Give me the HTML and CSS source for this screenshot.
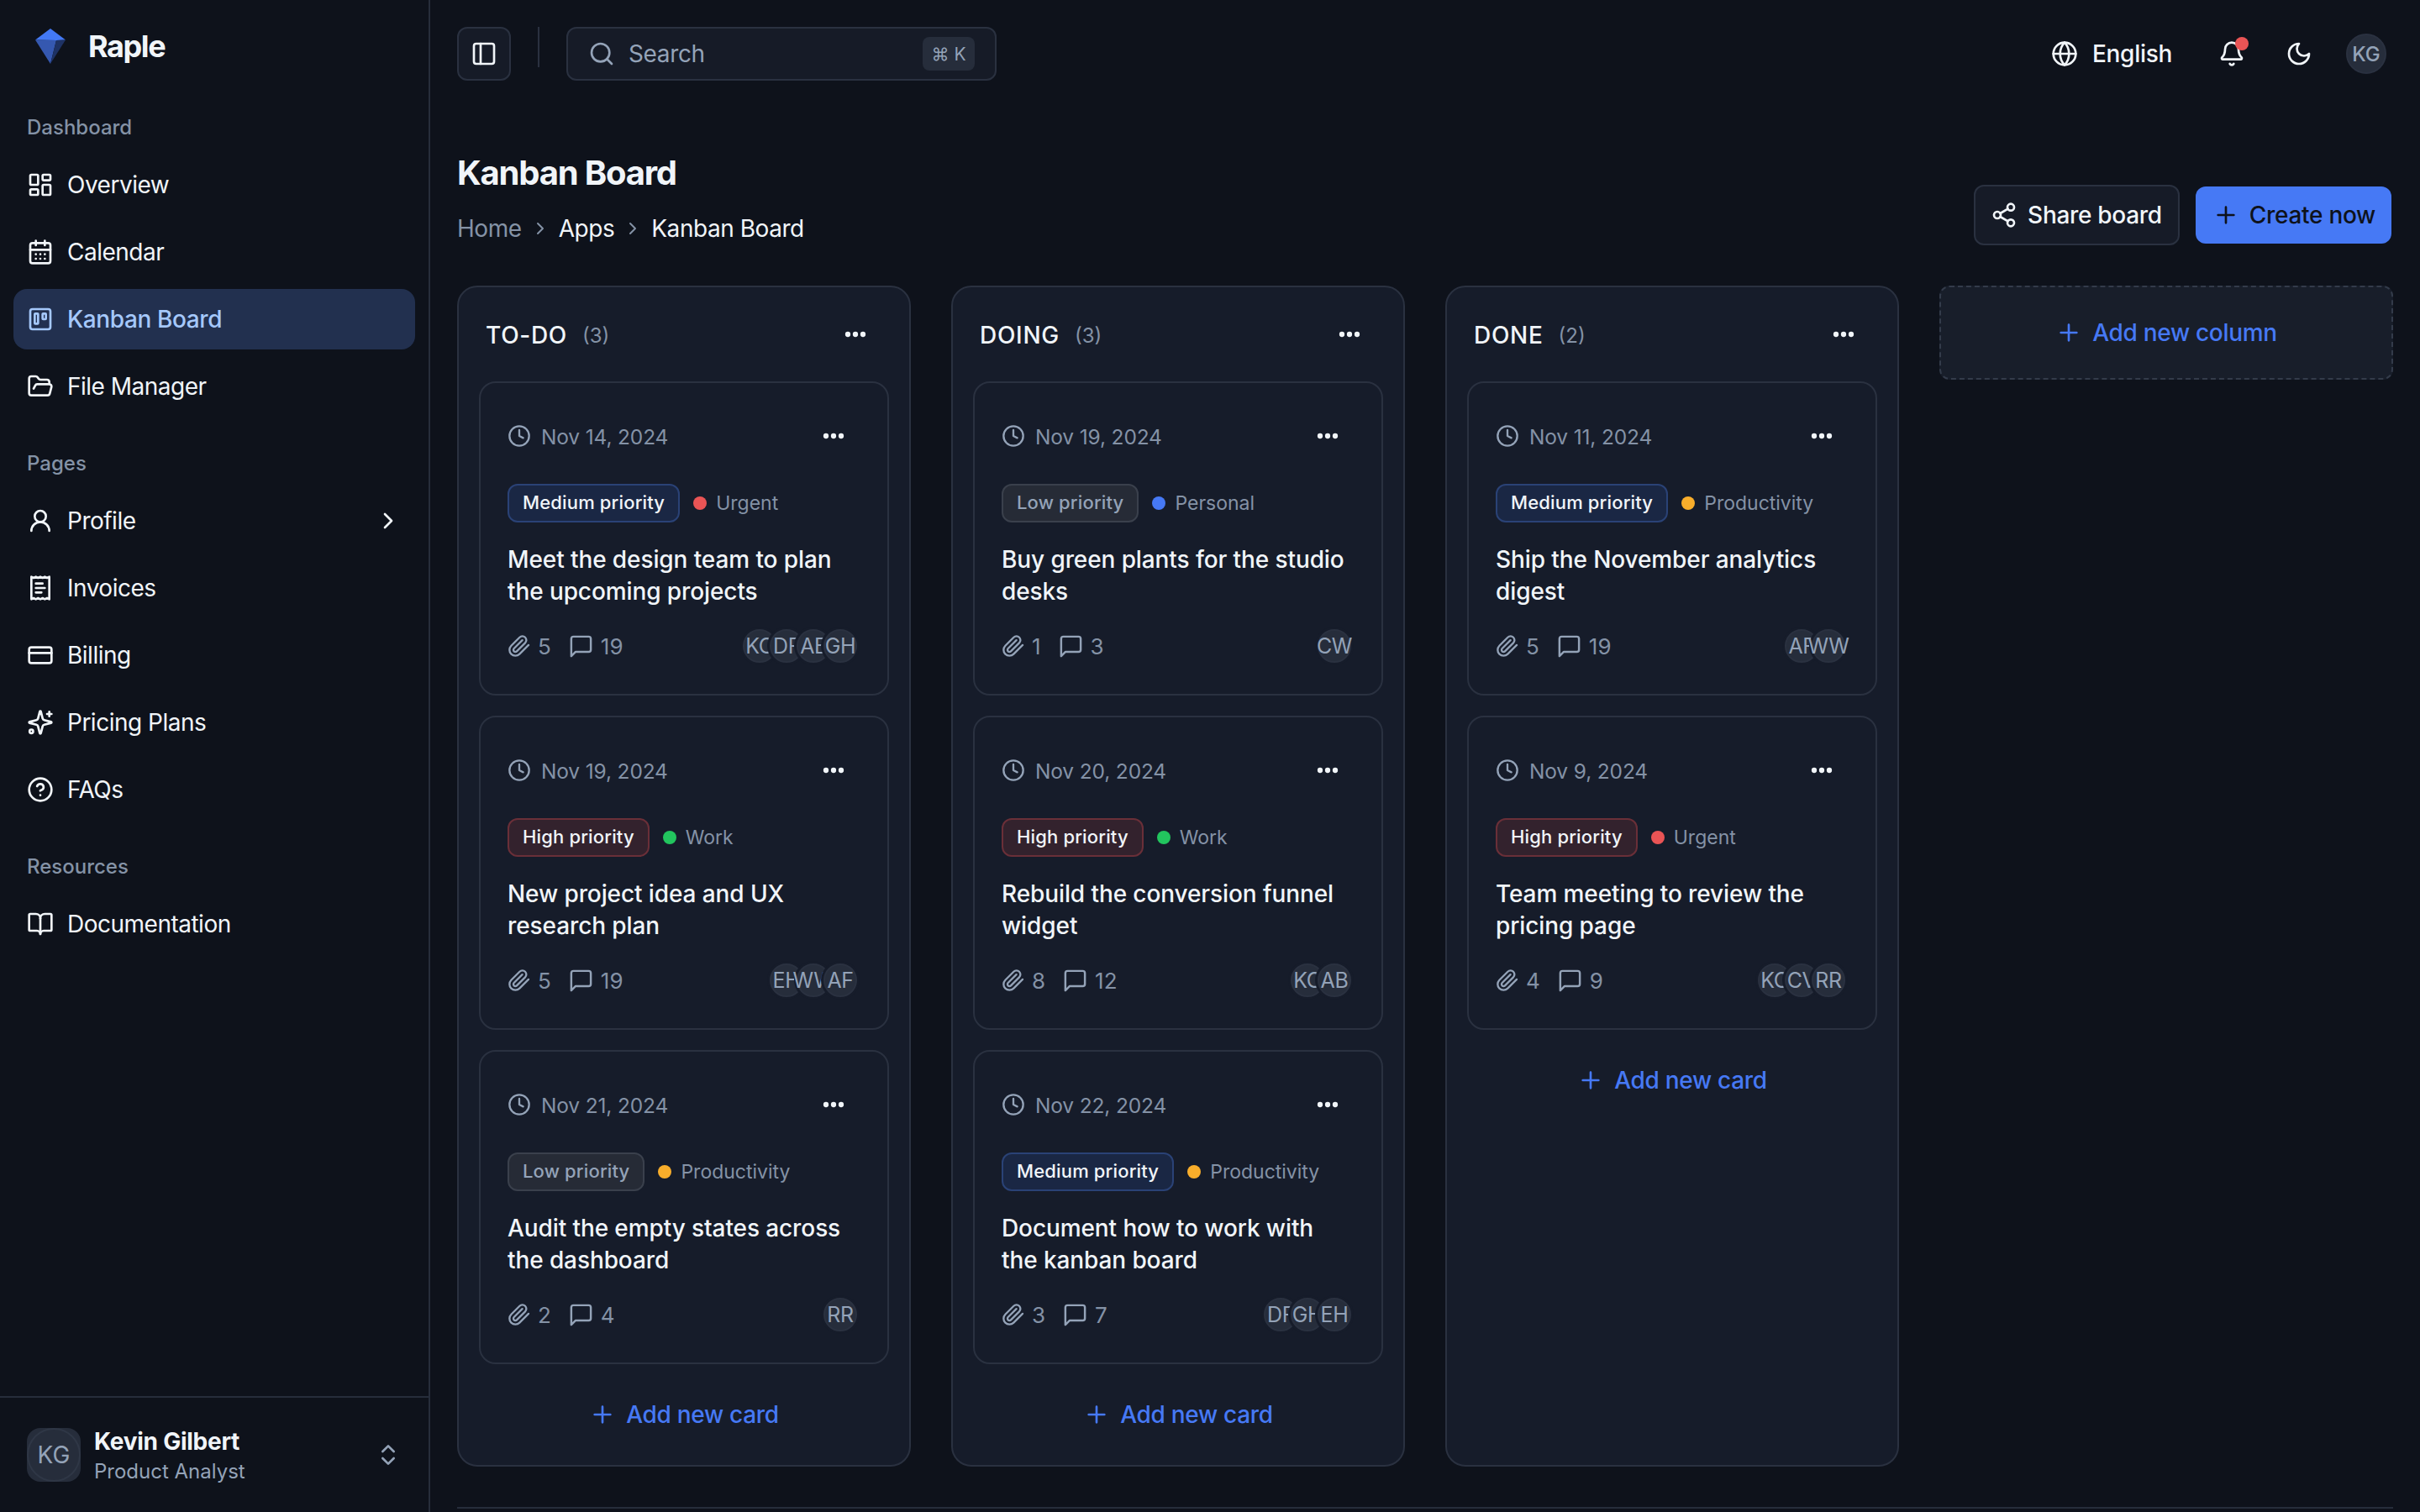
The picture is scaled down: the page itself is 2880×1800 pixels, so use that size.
FILE: index.html
```html
<!DOCTYPE html>
<html>
<head>
  <title>Kanban Board</title>
  <link rel="stylesheet" href="styles.css">
</head>
<body>
  <!-- icon sprite -->
  <svg class="sprite" xmlns="http://www.w3.org/2000/svg">
    <symbol id="i-overview" viewBox="0 0 24 24"><rect x="3" y="3" width="7" height="9" rx="1"/><rect x="14" y="3" width="7" height="5" rx="1"/><rect x="14" y="12" width="7" height="9" rx="1"/><rect x="3" y="16" width="7" height="5" rx="1"/></symbol>
    <symbol id="i-calendar" viewBox="0 0 24 24"><path d="M8 2v4M16 2v4"/><rect x="3" y="4" width="18" height="18" rx="2"/><path d="M3 10h18M8 14h.01M12 14h.01M16 14h.01M8 18h.01M12 18h.01M16 18h.01"/></symbol>
    <symbol id="i-kanban" viewBox="0 0 24 24"><rect x="3" y="3" width="18" height="18" rx="2"/><rect x="7" y="7" width="3" height="9" rx=".5"/><rect x="14" y="7" width="3" height="5" rx=".5"/></symbol>
    <symbol id="i-folder" viewBox="0 0 24 24"><path d="m6 14 1.5-2.9A2 2 0 0 1 9.24 10H20a2 2 0 0 1 1.94 2.5l-1.54 6a2 2 0 0 1-1.95 1.5H4a2 2 0 0 1-2-2V5a2 2 0 0 1 2-2h3.9a2 2 0 0 1 1.69.9l.81 1.2a2 2 0 0 0 1.67.9H18a2 2 0 0 1 2 2v2"/></symbol>
    <symbol id="i-user" viewBox="0 0 24 24"><circle cx="12" cy="8" r="5"/><path d="M20 21a8 8 0 0 0-16 0"/></symbol>
    <symbol id="i-receipt" viewBox="0 0 24 24"><path d="M4 2v20l2-1 2 1 2-1 2 1 2-1 2 1 2-1 2 1V2l-2 1-2-1-2 1-2-1-2 1-2-1-2 1Z"/><path d="M14 8H8M16 12H8M13 16H8"/></symbol>
    <symbol id="i-card" viewBox="0 0 24 24"><rect x="2" y="5" width="20" height="14" rx="2"/><path d="M2 10h20"/></symbol>
    <symbol id="i-sparkle" viewBox="0 0 24 24"><path d="M9.937 15.5A2 2 0 0 0 8.5 14.063l-6.135-1.582a.5.5 0 0 1 0-.962L8.5 9.936A2 2 0 0 0 9.937 8.5l1.582-6.135a.5.5 0 0 1 .963 0L14.063 8.5A2 2 0 0 0 15.5 9.937l6.135 1.581a.5.5 0 0 1 0 .964L15.5 14.063a2 2 0 0 0-1.437 1.437l-1.582 6.135a.5.5 0 0 1-.963 0z"/><path d="M20 2.5v4M22 4.5h-4"/><circle cx="4" cy="20" r="1.6"/></symbol>
    <symbol id="i-help" viewBox="0 0 24 24"><circle cx="12" cy="12" r="10"/><path d="M9.09 9a3 3 0 0 1 5.83 1c0 2-3 3-3 3M12 17h.01"/></symbol>
    <symbol id="i-book" viewBox="0 0 24 24"><path d="M12 7v14"/><path d="M3 18a1 1 0 0 1-1-1V4a1 1 0 0 1 1-1h5a4 4 0 0 1 4 4 4 4 0 0 1 4-4h5a1 1 0 0 1 1 1v13a1 1 0 0 1-1 1h-6a3 3 0 0 0-3 3 3 3 0 0 0-3-3z"/></symbol>
    <symbol id="i-right" viewBox="0 0 24 24"><path d="m9 18 6-6-6-6"/></symbol>
    <symbol id="i-updown" viewBox="0 0 24 24"><path d="m7 15 5 5 5-5M7 9l5-5 5 5"/></symbol>
    <symbol id="i-panel" viewBox="0 0 24 24"><rect x="3" y="3" width="18" height="18" rx="2"/><path d="M9 3v18"/></symbol>
    <symbol id="i-search" viewBox="0 0 24 24"><circle cx="11" cy="11" r="8"/><path d="m21 21-4.3-4.3"/></symbol>
    <symbol id="i-globe" viewBox="0 0 24 24"><circle cx="12" cy="12" r="10"/><path d="M12 2a14.5 14.5 0 0 0 0 20 14.5 14.5 0 0 0 0-20M2 12h20"/></symbol>
    <symbol id="i-bell" viewBox="0 0 24 24"><path d="M10.268 21a2 2 0 0 0 3.464 0"/><path d="M3.262 15.326A1 1 0 0 0 4 17h16a1 1 0 0 0 .74-1.673C19.41 13.956 18 12.499 18 8A6 6 0 0 0 6 8c0 4.499-1.411 5.956-2.738 7.326"/></symbol>
    <symbol id="i-moon" viewBox="0 0 24 24"><path d="M12 3a6 6 0 0 0 9 9 9 9 0 1 1-9-9Z"/></symbol>
    <symbol id="i-share" viewBox="0 0 24 24"><circle cx="18" cy="5" r="3"/><circle cx="6" cy="12" r="3"/><circle cx="18" cy="19" r="3"/><path d="m8.59 13.51 6.83 3.98M15.41 6.51l-6.82 3.98"/></symbol>
    <symbol id="i-plus" viewBox="0 0 24 24"><path d="M5 12h14M12 5v14"/></symbol>
    <symbol id="i-clock" viewBox="0 0 24 24"><circle cx="12" cy="12" r="10"/><path d="M12 6v6l4 2"/></symbol>
    <symbol id="i-clip" viewBox="0 0 24 24"><path d="m21.44 11.05-9.19 9.19a6 6 0 0 1-8.49-8.49l8.57-8.57A4 4 0 1 1 18 8.84l-8.59 8.57a2 2 0 0 1-2.83-2.83l8.49-8.48"/></symbol>
    <symbol id="i-comment" viewBox="0 0 24 24"><path d="M21 15a2 2 0 0 1-2 2H7l-4 4V5a2 2 0 0 1 2-2h14a2 2 0 0 1 2 2z"/></symbol>
    <symbol id="i-dots" viewBox="0 0 24 24"><circle cx="6" cy="12" r="2.1"/><circle cx="12" cy="12" r="2.1"/><circle cx="18" cy="12" r="2.1"/></symbol>
  </svg>

  <aside class="sidebar">
    <div class="brand">
      <svg class="brand-logo" viewBox="0 0 38 42" xmlns="http://www.w3.org/2000/svg">
        <polygon points="19,0 37,13.5 26,14 1,13.5" fill="#4379f5"/>
        <polygon points="1,13.5 26,14 19,42" fill="#3558b0"/>
        <polygon points="26,14 37,13.5 19,42" fill="#1e3264"/>
      </svg>
      <span>Raple</span>
    </div>

    <div class="nav-section nav-first">
      <p class="nav-label">Dashboard</p>
      <nav class="nav-list">
        <a class="nav-item"><svg class="icon"><use href="#i-overview"/></svg>Overview</a>
        <a class="nav-item"><svg class="icon"><use href="#i-calendar"/></svg>Calendar</a>
        <a class="nav-item active"><svg class="icon"><use href="#i-kanban"/></svg>Kanban Board</a>
        <a class="nav-item"><svg class="icon"><use href="#i-folder"/></svg>File Manager</a>
      </nav>
    </div>

    <div class="nav-section">
      <p class="nav-label">Pages</p>
      <nav class="nav-list">
        <a class="nav-item"><svg class="icon"><use href="#i-user"/></svg>Profile<svg class="icon nav-arrow"><use href="#i-right"/></svg></a>
        <a class="nav-item"><svg class="icon"><use href="#i-receipt"/></svg>Invoices</a>
        <a class="nav-item"><svg class="icon"><use href="#i-card"/></svg>Billing</a>
        <a class="nav-item"><svg class="icon"><use href="#i-sparkle"/></svg>Pricing Plans</a>
        <a class="nav-item"><svg class="icon"><use href="#i-help"/></svg>FAQs</a>
      </nav>
    </div>

    <div class="nav-section">
      <p class="nav-label">Resources</p>
      <nav class="nav-list">
        <a class="nav-item"><svg class="icon"><use href="#i-book"/></svg>Documentation</a>
      </nav>
    </div>

    <div class="side-user">
      <div class="side-avatar"><span>KG</span></div>
      <div class="side-user-text">
        <p class="side-user-name">Kevin Gilbert</p>
        <p class="side-user-role">Product Analyst</p>
      </div>
      <svg class="icon side-updown"><use href="#i-updown"/></svg>
    </div>
  </aside>

  <main class="main">
    <header class="topbar">
      <button class="toggle-btn"><svg class="icon"><use href="#i-panel"/></svg></button>
      <span class="topbar-sep"></span>
      <div class="search">
        <svg class="icon"><use href="#i-search"/></svg>
        <span class="search-text">Search</span>
        <kbd class="search-key">⌘ K</kbd>
      </div>
      <div class="topbar-right">
        <div class="lang"><svg class="icon"><use href="#i-globe"/></svg>English</div>
        <div class="bell"><svg class="icon"><use href="#i-bell"/></svg><span class="bell-dot"></span></div>
        <svg class="icon moon"><use href="#i-moon"/></svg>
        <div class="top-avatar">KG</div>
      </div>
    </header>

    <section class="page-head">
      <div>
        <h1 class="page-title">Kanban Board</h1>
        <div class="crumbs">
          <span class="crumb-home">Home</span>
          <svg class="crumb-sep"><use href="#i-right"/></svg>
          <span>Apps</span>
          <svg class="crumb-sep"><use href="#i-right"/></svg>
          <span>Kanban Board</span>
        </div>
      </div>
      <div class="page-actions">
        <button class="btn btn-share"><svg class="icon"><use href="#i-share"/></svg>Share board</button>
        <button class="btn btn-create"><svg class="icon"><use href="#i-plus"/></svg>Create now</button>
      </div>
    </section>

    <section class="board">
      <div class="column">
        <div class="column-head">
          <h2>TO-DO</h2><span class="column-count">(3)</span>
          <svg class="dots"><use href="#i-dots"/></svg>
        </div>
        <div class="card-list">
          <article class="card">
            <div class="card-date"><svg class="icon-sm"><use href="#i-clock"/></svg><span>Nov 14, 2024</span><svg class="dots"><use href="#i-dots"/></svg></div>
            <div class="card-tags"><span class="badge medium">Medium priority</span><span class="tag"><i class="tag-dot red"></i>Urgent</span></div>
            <h3 class="card-title">Meet the design team to plan the upcoming projects</h3>
            <div class="card-foot">
              <span class="stat"><svg class="icon-sm"><use href="#i-clip"/></svg>5</span>
              <span class="stat"><svg class="icon-comment"><use href="#i-comment"/></svg>19</span>
              <div class="avatars"><span class="avatar">KC</span><span class="avatar">DF</span><span class="avatar">AE</span><span class="avatar">GH</span></div>
            </div>
          </article>
          <article class="card">
            <div class="card-date"><svg class="icon-sm"><use href="#i-clock"/></svg><span>Nov 19, 2024</span><svg class="dots"><use href="#i-dots"/></svg></div>
            <div class="card-tags"><span class="badge high">High priority</span><span class="tag"><i class="tag-dot green"></i>Work</span></div>
            <h3 class="card-title">New project idea and UX research plan</h3>
            <div class="card-foot">
              <span class="stat"><svg class="icon-sm"><use href="#i-clip"/></svg>5</span>
              <span class="stat"><svg class="icon-comment"><use href="#i-comment"/></svg>19</span>
              <div class="avatars"><span class="avatar">EH</span><span class="avatar">WW</span><span class="avatar">AF</span></div>
            </div>
          </article>
          <article class="card">
            <div class="card-date"><svg class="icon-sm"><use href="#i-clock"/></svg><span>Nov 21, 2024</span><svg class="dots"><use href="#i-dots"/></svg></div>
            <div class="card-tags"><span class="badge low">Low priority</span><span class="tag"><i class="tag-dot orange"></i>Productivity</span></div>
            <h3 class="card-title">Audit the empty states across the dashboard</h3>
            <div class="card-foot">
              <span class="stat"><svg class="icon-sm"><use href="#i-clip"/></svg>2</span>
              <span class="stat"><svg class="icon-comment"><use href="#i-comment"/></svg>4</span>
              <div class="avatars"><span class="avatar">RR</span></div>
            </div>
          </article>
        </div>
        <a class="add-card"><svg class="icon"><use href="#i-plus"/></svg>Add new card</a>
      </div>

      <div class="column">
        <div class="column-head">
          <h2>DOING</h2><span class="column-count">(3)</span>
          <svg class="dots"><use href="#i-dots"/></svg>
        </div>
        <div class="card-list">
          <article class="card">
            <div class="card-date"><svg class="icon-sm"><use href="#i-clock"/></svg><span>Nov 19, 2024</span><svg class="dots"><use href="#i-dots"/></svg></div>
            <div class="card-tags"><span class="badge low">Low priority</span><span class="tag"><i class="tag-dot blue"></i>Personal</span></div>
            <h3 class="card-title">Buy green plants for the studio desks</h3>
            <div class="card-foot">
              <span class="stat"><svg class="icon-sm"><use href="#i-clip"/></svg>1</span>
              <span class="stat"><svg class="icon-comment"><use href="#i-comment"/></svg>3</span>
              <div class="avatars"><span class="avatar">CW</span></div>
            </div>
          </article>
          <article class="card">
            <div class="card-date"><svg class="icon-sm"><use href="#i-clock"/></svg><span>Nov 20, 2024</span><svg class="dots"><use href="#i-dots"/></svg></div>
            <div class="card-tags"><span class="badge high">High priority</span><span class="tag"><i class="tag-dot green"></i>Work</span></div>
            <h3 class="card-title">Rebuild the conversion funnel widget</h3>
            <div class="card-foot">
              <span class="stat"><svg class="icon-sm"><use href="#i-clip"/></svg>8</span>
              <span class="stat"><svg class="icon-comment"><use href="#i-comment"/></svg>12</span>
              <div class="avatars"><span class="avatar">KC</span><span class="avatar">AB</span></div>
            </div>
          </article>
          <article class="card">
            <div class="card-date"><svg class="icon-sm"><use href="#i-clock"/></svg><span>Nov 22, 2024</span><svg class="dots"><use href="#i-dots"/></svg></div>
            <div class="card-tags"><span class="badge medium">Medium priority</span><span class="tag"><i class="tag-dot orange"></i>Productivity</span></div>
            <h3 class="card-title">Document how to work with the kanban board</h3>
            <div class="card-foot">
              <span class="stat"><svg class="icon-sm"><use href="#i-clip"/></svg>3</span>
              <span class="stat"><svg class="icon-comment"><use href="#i-comment"/></svg>7</span>
              <div class="avatars"><span class="avatar">DF</span><span class="avatar">GH</span><span class="avatar">EH</span></div>
            </div>
          </article>
        </div>
        <a class="add-card"><svg class="icon"><use href="#i-plus"/></svg>Add new card</a>
      </div>

      <div class="column">
        <div class="column-head">
          <h2>DONE</h2><span class="column-count">(2)</span>
          <svg class="dots"><use href="#i-dots"/></svg>
        </div>
        <div class="card-list">
          <article class="card">
            <div class="card-date"><svg class="icon-sm"><use href="#i-clock"/></svg><span>Nov 11, 2024</span><svg class="dots"><use href="#i-dots"/></svg></div>
            <div class="card-tags"><span class="badge medium">Medium priority</span><span class="tag"><i class="tag-dot orange"></i>Productivity</span></div>
            <h3 class="card-title">Ship the November analytics digest</h3>
            <div class="card-foot">
              <span class="stat"><svg class="icon-sm"><use href="#i-clip"/></svg>5</span>
              <span class="stat"><svg class="icon-comment"><use href="#i-comment"/></svg>19</span>
              <div class="avatars"><span class="avatar">AF</span><span class="avatar">WW</span></div>
            </div>
          </article>
          <article class="card">
            <div class="card-date"><svg class="icon-sm"><use href="#i-clock"/></svg><span>Nov 9, 2024</span><svg class="dots"><use href="#i-dots"/></svg></div>
            <div class="card-tags"><span class="badge high">High priority</span><span class="tag"><i class="tag-dot red"></i>Urgent</span></div>
            <h3 class="card-title">Team meeting to review the pricing page</h3>
            <div class="card-foot">
              <span class="stat"><svg class="icon-sm"><use href="#i-clip"/></svg>4</span>
              <span class="stat"><svg class="icon-comment"><use href="#i-comment"/></svg>9</span>
              <div class="avatars"><span class="avatar">KC</span><span class="avatar">CV</span><span class="avatar">RR</span></div>
            </div>
          </article>
        </div>
        <a class="add-card"><svg class="icon"><use href="#i-plus"/></svg>Add new card</a>
      </div>

      <a class="add-column"><svg class="icon"><use href="#i-plus"/></svg>Add new column</a>
    </section>

    <div class="page-foot"></div>
  </main>
</body>
</html>
```
FILE: styles.css
```css
* {
  box-sizing: border-box;
}

html,
body {
  height: 1800px;
  overflow: hidden;
}

body {
  display: flex;
  margin: 0;
  background-color: #0e121b;
  color: #f1f5f9;
  font-family: Inter, "Liberation Sans", sans-serif;
}

p,
h1,
h2,
h3 {
  margin: 0;
}

button {
  font-family: inherit;
}

.sprite {
  display: none;
}

.icon {
  width: 32px;
  height: 32px;
  flex: none;
  fill: none;
  stroke: currentColor;
  stroke-width: 2;
  stroke-linecap: round;
  stroke-linejoin: round;
}

.icon-sm,
.icon-comment {
  width: 28px;
  height: 28px;
  flex: none;
  fill: none;
  stroke: #94a3b8;
  stroke-width: 2;
  stroke-linecap: round;
  stroke-linejoin: round;
}

.icon-comment {
  width: 31px;
  height: 31px;
  stroke-width: 1.9;
}

.dots {
  width: 36px;
  height: 36px;
  flex: none;
  margin-left: auto;
  fill: #f1f5f9;
}

/* sidebar */
.sidebar {
  display: flex;
  flex-direction: column;
  flex: none;
  width: 512px;
  height: 1800px;
  border-right: 2px solid #262d3b;
}

.brand {
  display: flex;
  align-items: center;
  gap: 26px;
  height: 110px;
  padding-left: 41px;
  font-size: 36px;
  font-weight: 700;
  letter-spacing: -1.4px;
}

.brand-logo {
  width: 38px;
  height: 42px;
}

.nav-section {
  margin-top: 38px;
  padding: 0 16px;
}

.nav-first {
  margin-top: 24px;
}

.nav-label {
  height: 36px;
  margin-bottom: 14px;
  padding-left: 16px;
  color: #8492a6;
  font-size: 24px;
  font-weight: 500;
  line-height: 36px;
}

.nav-list {
  display: flex;
  flex-direction: column;
  gap: 8px;
}

.nav-item {
  display: flex;
  align-items: center;
  gap: 16px;
  height: 72px;
  padding: 0 16px;
  border-radius: 16px;
  color: #f1f5f9;
  font-size: 28px;
  font-weight: 430;
  letter-spacing: -0.5px;
}

.nav-item.active {
  background-color: #22304f;
  color: #a5c8fb;
  font-weight: 500;
  letter-spacing: -0.4px;
}

.nav-arrow {
  margin-left: auto;
}

.side-user {
  display: flex;
  align-items: center;
  gap: 16px;
  height: 138px;
  margin-top: auto;
  padding: 0 32px;
  border-top: 2px solid #262d3b;
}

.side-avatar {
  display: flex;
  align-items: center;
  justify-content: center;
  width: 64px;
  height: 64px;
  flex: none;
  border-radius: 16px;
  background-color: #262d3b;
}

.side-avatar span {
  display: flex;
  align-items: center;
  justify-content: center;
  width: 64px;
  height: 64px;
  border: 2px solid #2f3746;
  border-radius: 50%;
  color: #94a3b8;
  font-size: 28px;
}

.side-user-name {
  font-size: 28px;
  font-weight: 650;
  letter-spacing: -0.25px;
  line-height: 40px;
}

.side-user-role {
  color: #94a3b8;
  font-size: 24px;
  line-height: 32px;
}

.side-updown {
  margin-left: auto;
  color: #94a3b8;
}

/* main area */
.main {
  display: flex;
  flex-direction: column;
  flex: 1;
  min-width: 0;
  height: 1800px;
  padding: 32px 32px 0;
}

.topbar {
  display: flex;
  align-items: flex-start;
  height: 64px;
  flex: none;
}

.toggle-btn {
  display: flex;
  align-items: center;
  justify-content: center;
  width: 64px;
  height: 64px;
  padding: 0;
  border: 2px solid #2a3140;
  border-radius: 12px;
  background-color: #161b27;
  color: #f1f5f9;
}

.topbar-sep {
  width: 2px;
  height: 48px;
  margin: 0 32px;
  background-color: #2a3140;
}

.search {
  display: flex;
  align-items: center;
  gap: 16px;
  width: 512px;
  height: 64px;
  padding: 0 24px;
  border: 2px solid #2a3140;
  border-radius: 12px;
  background-color: #161b27;
  color: #94a3b8;
}

.search-text {
  font-size: 28px;
  letter-spacing: -0.35px;
}

.search-key {
  display: flex;
  align-items: center;
  justify-content: center;
  width: 62px;
  height: 40px;
  margin-left: auto;
  border-radius: 8px;
  background-color: #262d3b;
  color: #94a3b8;
  font-family: Inter, "DejaVu Sans", sans-serif;
  font-size: 21px;
}

.topbar-right {
  display: flex;
  align-items: center;
  height: 64px;
  margin-left: auto;
  padding-right: 8px;
}

.lang {
  display: flex;
  align-items: center;
  gap: 17px;
  margin-right: 55px;
  font-size: 28px;
  font-weight: 550;
  letter-spacing: -0.3px;
}

.bell {
  position: relative;
  width: 32px;
  height: 32px;
}

.bell-dot {
  position: absolute;
  top: -4px;
  right: -4px;
  width: 16px;
  height: 16px;
  border-radius: 50%;
  background-color: #ea5455;
}

.moon {
  margin-left: 48px;
}

.top-avatar {
  display: flex;
  align-items: center;
  justify-content: center;
  width: 48px;
  height: 48px;
  margin-left: 40px;
  border: 2px solid #2a3140;
  border-radius: 50%;
  background-color: #262d3b;
  color: #94a3b8;
  font-size: 24px;
  font-weight: 500;
}

.page-head {
  display: flex;
  align-items: flex-end;
  justify-content: space-between;
  flex: none;
  margin-top: 86px;
}

.page-title {
  font-size: 40px;
  font-weight: 650;
  letter-spacing: -1.2px;
  line-height: 48px;
}

.crumbs {
  display: flex;
  align-items: center;
  gap: 10px;
  height: 40px;
  margin-top: 22px;
  font-size: 28px;
  letter-spacing: -0.45px;
}

.crumb-home {
  color: #8492a6;
}

.crumb-sep {
  width: 24px;
  height: 24px;
  fill: none;
  stroke: #8492a6;
  stroke-width: 2;
  stroke-linecap: round;
  stroke-linejoin: round;
}

.page-actions {
  display: flex;
  align-items: center;
  gap: 19px;
  padding-right: 2px;
}

.btn {
  display: flex;
  align-items: center;
  border-radius: 12px;
  font-size: 28px;
  font-weight: 550;
  letter-spacing: -0.3px;
}

.btn-share {
  gap: 12px;
  height: 72px;
  padding: 0 19px 0 18px;
  border: 2px solid #2a3140;
  background-color: #161b27;
  color: #f1f5f9;
}

.btn-create {
  gap: 12px;
  height: 68px;
  padding: 0 19px 0 20px;
  border: 0;
  background-color: #4679f5;
  color: #0e121b;
}

/* board */
.board {
  display: flex;
  align-items: stretch;
  gap: 48px;
  flex: 1;
  min-height: 0;
  margin-top: 48px;
}

.column {
  display: flex;
  flex-direction: column;
  width: 540px;
  flex: none;
  padding: 0 24px;
  border: 2px solid #2a3140;
  border-radius: 24px;
  background-color: #161c2a;
}

.column-head {
  display: flex;
  align-items: center;
  height: 112px;
  padding: 0 22px 0 8px;
}

.column-head h2 {
  margin-top: 2px;
  font-size: 28px;
  font-weight: 550;
  letter-spacing: 0.7px;
}

.column-count {
  margin-top: 2px;
  margin-left: 18px;
  color: #8492a6;
  font-size: 24px;
}

.card-list {
  display: flex;
  flex-direction: column;
  gap: 24px;
}

.card {
  height: 374px;
  padding: 43px 32px 37px;
  border: 2px solid #2a3140;
  border-radius: 20px;
}

.card-date {
  display: flex;
  align-items: center;
  gap: 12px;
  height: 40px;
  color: #8492a6;
  font-size: 24.5px;
  letter-spacing: -0.15px;
}

.card-date span {
  padding-top: 1px;
}

.card-date .dots {
  margin-right: 14px;
}

.card-tags {
  display: flex;
  align-items: center;
  gap: 16px;
  margin-top: 37px;
}

.badge {
  display: flex;
  align-items: center;
  height: 46px;
  padding: 0 16px 2px;
  border: 2px solid;
  border-radius: 12px;
  font-size: 22px;
  font-weight: 550;
  letter-spacing: 0.15px;
}

.badge.medium {
  border-color: #2a4276;
  background-color: #1a2744;
  color: #f1f5f9;
}

.badge.high {
  border-color: #6a2f38;
  background-color: #33222d;
  color: #f1f5f9;
}

.badge.low {
  border-color: #3a404c;
  background-color: #262b36;
  color: #94a3b8;
}

.tag {
  display: flex;
  align-items: center;
  gap: 11px;
  color: #8492a6;
  font-size: 23px;
}

.tag-dot {
  width: 16px;
  height: 16px;
  border-radius: 50%;
}

.tag-dot.red {
  background-color: #ea5455;
}

.tag-dot.green {
  background-color: #22c55e;
}

.tag-dot.orange {
  background-color: #f9ae2b;
}

.tag-dot.blue {
  background-color: #4679f5;
}

.card-title {
  height: 76px;
  margin-top: 25px;
  font-size: 28px;
  font-weight: 540;
  letter-spacing: -0.1px;
  line-height: 38px;
}

.card-foot {
  display: flex;
  align-items: center;
  gap: 20px;
  height: 40px;
  margin-top: 26px;
  color: #8492a6;
  font-size: 26px;
}

.stat {
  display: flex;
  align-items: center;
  gap: 8px;
}

.avatars {
  display: flex;
  margin-left: auto;
  margin-right: 4px;
}

.avatar {
  display: flex;
  align-items: center;
  justify-content: center;
  width: 40px;
  height: 40px;
  margin-left: -8px;
  border: 2px solid #2a3140;
  border-radius: 50%;
  background-color: #262d3b;
  box-shadow: 0 0 0 3px #161c2a;
  color: #94a3b8;
  font-size: 25px;
  letter-spacing: -0.4px;
}

.add-card {
  display: flex;
  align-items: center;
  justify-content: center;
  gap: 12px;
  height: 40px;
  margin-top: 40px;
  color: #4679f5;
  font-size: 28px;
  font-weight: 500;
  letter-spacing: -0.3px;
}

.add-column {
  display: flex;
  align-items: center;
  justify-content: center;
  align-self: flex-start;
  gap: 12px;
  width: 540px;
  height: 112px;
  flex: none;
  border: 2px dashed #333b4a;
  border-radius: 12px;
  background-color: #181e2a;
  color: #4679f5;
  font-size: 28px;
  font-weight: 500;
  letter-spacing: -0.3px;
}

.page-foot {
  flex: none;
  height: 6px;
  margin-top: 48px;
  border-top: 2px solid #262d3b;
}
```
